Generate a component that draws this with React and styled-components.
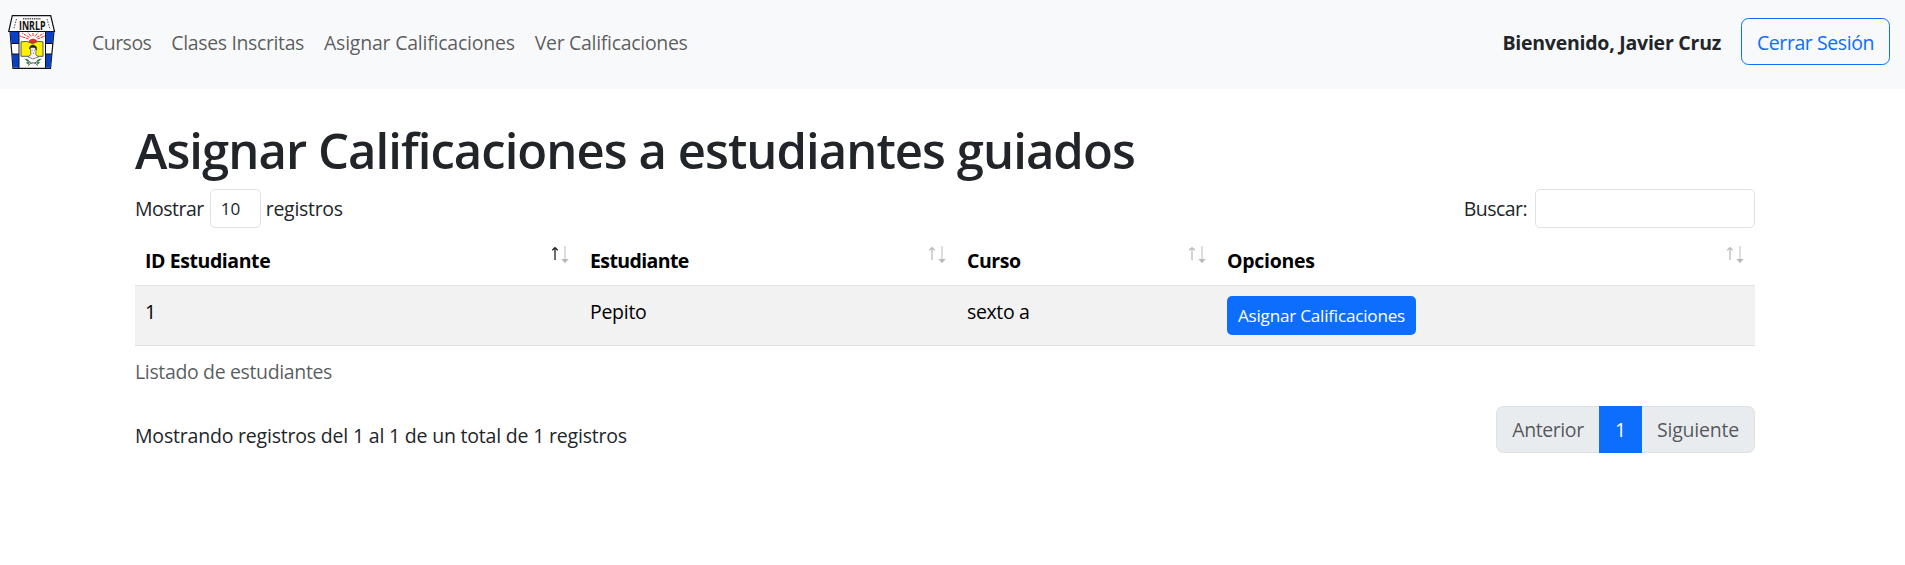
import React from "react";
import styled, { createGlobalStyle } from "styled-components";

const GlobalStyle = createGlobalStyle`
  *, *::before, *::after { box-sizing: border-box; }
  body {
    margin: 0;
    background: #fff;
    color: #212529;
    font-family: "Segoe UI", "Open Sans", "Noto Sans", sans-serif;
    font-size: 19.5px;
    font-weight: 400;
    line-height: 32px;
  }
  button, input, select { font: inherit; color: inherit; margin: 0; }
`;

const Text = styled.span`
  letter-spacing: ${(p) => p.$track || 0}px;
  white-space: nowrap;
`;

const Navbar = styled.nav`
  display: flex;
  align-items: flex-start;
  height: 88.5px;
  padding: 0 15px 0 0;
  background: #f8f9fa;
`;

const Brand = styled.a`
  display: block;
  width: 70px;
  height: 88px;
  margin-right: 12px;
`;

const NavLinks = styled.div`
  display: flex;
  flex: 1;
  padding-top: 27px;
`;

const NavLink = styled.a`
  padding: 0 10px;
  color: rgba(0, 0, 0, 0.65);
  text-decoration: none;
  letter-spacing: ${(p) => p.$track}px;
  white-space: nowrap;
`;

const Welcome = styled.strong`
  margin: 27px 20px 0 0;
  font-weight: 700;
  letter-spacing: -0.24px;
`;

const LogoutButton = styled.button`
  width: 149px;
  height: 47px;
  margin-top: 18px;
  padding: 2px 0 0;
  border: 1px solid #0d6efd;
  border-radius: 7.5px;
  background: transparent;
  color: #0d6efd;
  letter-spacing: -0.43px;
`;

const Container = styled.main`
  width: 1620px;
  margin: 30px auto 0 135px;
`;

const Title = styled.h1`
  margin: 0 0 8px;
  font-size: 49px;
  font-weight: 560;
  line-height: 62.5px;
  letter-spacing: -0.95px;
  white-space: nowrap;
`;

const Controls = styled.div`
  display: flex;
  justify-content: space-between;
  height: 46px;
`;

const ControlLabel = styled.label`
  display: flex;
  align-items: center;
  height: 39px;
`;

const LengthBox = styled.button`
  width: 51px;
  height: 39px;
  margin: 0 5px 0 6px;
  padding: 0 0 0 10px;
  border: 1px solid #dee2e6;
  border-radius: 5px;
  background: #fff;
  font-size: 17.1px;
  text-align: left;
`;

const SearchInput = styled.input`
  width: 220px;
  height: 39px;
  margin-left: 8px;
  border: 1px solid #dee2e6;
  border-radius: 5px;
  background: #fff;
`;

const Table = styled.table`
  width: 100%;
  table-layout: fixed;
  border-collapse: separate;
  border-spacing: 0;
  caption-side: bottom;
  color: #000;
`;

const HeadCell = styled.th`
  width: ${(p) => p.$width}px;
  height: 51px;
  padding: 10px 10px 0;
  border-bottom: 1px solid #dee2e6;
  font-weight: 700;
  text-align: left;
  vertical-align: top;
`;

const HeadContent = styled.div`
  display: flex;
  justify-content: space-between;
`;

const SortIcon = styled.svg`
  flex: none;
  width: 18px;
  height: 18px;
  margin: 1px 1px 0 0;
`;

const Cell = styled.td`
  height: 60px;
  padding: 10px 10px 0;
  border-bottom: 1px solid #dee2e6;
  background: #f2f2f2;
  vertical-align: top;
`;

const AssignButton = styled.button`
  display: block;
  width: 189px;
  height: 39px;
  padding: 0;
  border: 0;
  border-radius: 5px;
  background: #0d6efd;
  color: #fff;
  font-size: 17.1px;
  letter-spacing: -0.21px;
`;

const Caption = styled.caption`
  height: 50px;
  padding: 10px 0 8px;
  color: rgba(33, 37, 41, 0.75);
  text-align: left;
`;

const Footer = styled.div`
  display: flex;
  justify-content: space-between;
  margin-top: 10px;
`;

const Info = styled.div`
  padding-top: 14px;
`;

const Pagination = styled.div`
  display: flex;
  height: 47px;
  border-radius: 7.5px;
`;

const PageItem = styled.button`
  width: ${(p) => p.$width}px;
  padding: 0;
  border: 1px solid ${(p) => (p.$active ? "#0d6efd" : "#dee2e6")};
  border-left-width: ${(p) => (p.$side === "right" ? 0 : 1)}px;
  border-right-width: ${(p) => (p.$side === "left" ? 0 : 1)}px;
  border-radius: ${(p) =>
    p.$side === "left" ? "7.5px 0 0 7.5px" : p.$side === "right" ? "0 7.5px 7.5px 0" : "0"};
  background: ${(p) => (p.$active ? "#0d6efd" : "#e9ecef")};
  color: ${(p) => (p.$active ? "#fff" : "rgba(33, 37, 41, 0.75)")};
`;

function Logo() {
  return (
    <svg width="70" height="88" viewBox="0 0 70 88" aria-label="INRLP">
      <path d="M10 31 L13 68.3 H50.5 L54 31 Z" fill="#fff" stroke="#111" strokeWidth="1.2" />
      <path d="M10.2 31.5 H19 V43.5 H11.3 Z M12 54 H19 V67.8 H13.2 Z" fill="#0b3fc4" />
      <path d="M45.5 31.5 H53.8 L52.8 43.5 H45.5 Z M45.5 54 H51.8 L50.5 67.8 H45.5 Z" fill="#0b3fc4" />
      <path d="M19 31.5 V68 M45.5 31.5 V68 M11.2 43.5 H19 M12 54 H19 M45.5 43.5 H53 M45.5 54 H52" stroke="#111" strokeWidth="1" />
      <path d="M12.3 15.7 H50.7 L54.5 31.5 H8.7 Z" fill="#fafafa" stroke="#111" strokeWidth="1.2" />
      <path d="M16.5 19 L13.8 29 M47 19 L50 29" stroke="#555" strokeWidth="1" strokeDasharray="1.5 1.2" />
      <path d="M23 18.8 H41" stroke="#555" strokeWidth="1.5" strokeDasharray="1.4 .8" />
      <text x="19" y="29.7" fontFamily="Open Sans, sans-serif" fontSize="11.5" fontWeight="700" textLength="26.5" lengthAdjust="spacingAndGlyphs" fill="#111">INRLP</text>
      <path d="M28.5 39 L20 36 M29.5 37.5 L22 33 M31 36.5 L28 32.5 M33 36 V32.5 M35 36.5 L38 32.5 M36.5 37.5 L43.5 33.5 M37.5 39 L45 36" stroke="#ef2b24" strokeWidth="1" strokeDasharray="3 .7" />
      <path d="M28.8 41.5 C29.5 37.8 36.5 37.8 37.2 41.5 L36.2 43.7 H30 Z" fill="#ec2b20" />
      <path d="M21 41.8 Q27 40.3 32.5 43.5 Q38 40.3 43 41.8 V56.3 H21 Z" fill="#fff200" stroke="#333" strokeWidth=".8" />
      <path d="M30 47 C30.5 44.2 36.2 44.5 36.2 49 C36.2 52 35.4 54 36 55 L38.5 57 L32.8 59 L28 56.8 L31 54.5 Z" fill="#f2f2f2" stroke="#333" strokeWidth=".6" />
      <path d="M29.5 49 C29.4 45 33.6 44 36.4 47 L36.3 50 L35 47.5 L30.8 47.6 Z M31.5 50.3 H32.6 M34 50.3 H35.2 M32.8 53.2 H34.3" fill="#222" stroke="#222" strokeWidth=".5" />
      <path d="M26 59 L31 63 M40 59 L35 63 M28 65.5 Q33 60 38 65.5" fill="none" stroke="#333" strokeWidth=".9" />
      <path d="M24 58.5 L29 60 L28 62 Z M42 58.5 L37 60 L38 62 Z M25.5 62.5 L29.5 62 L28.5 64.5 Z M40.5 62.5 L36.5 62 L37.5 64.5 Z" fill="#287a38" />
    </svg>
  );
}

function SortArrows({ active }) {
  return (
    <SortIcon viewBox="0 0 18 18">
      <path d="M4 14 V2.2 M1.2 4.3 L4 1.7 L6.8 4.3" fill="none" stroke={active ? "#222" : "#bcbcbc"} strokeWidth="1.3" />
      <path d="M14 0 V14" stroke="#dedede" strokeWidth="2" />
      <path d="M10.3 13 H17.7 L14 17.2 Z" fill="#b9b9b9" />
    </SortIcon>
  );
}

const links = [
  ["Cursos", -0.53],
  ["Clases Inscritas", -0.375],
  ["Asignar Calificaciones", -0.23],
  ["Ver Calificaciones", -0.31],
];

const columns = [
  { label: "ID Estudiante", width: 445, track: -0.42, active: true },
  { label: "Estudiante", width: 377, track: -0.6 },
  { label: "Curso", width: 260, track: -0.45 },
  { label: "Opciones", width: 538, track: -0.3 },
];

export default function App() {
  return (
    <>
      <GlobalStyle />
      <Navbar>
        <Brand><Logo /></Brand>
        <NavLinks>
          {links.map(([label, track]) => (
            <NavLink key={label} $track={track}>{label}</NavLink>
          ))}
        </NavLinks>
        <Welcome>Bienvenido, Javier Cruz</Welcome>
        <LogoutButton>Cerrar Sesión</LogoutButton>
      </Navbar>
      <Container>
        <Title>Asignar Calificaciones a estudiantes guiados</Title>
        <Controls>
          <ControlLabel>
            <Text $track={-0.5}>Mostrar</Text>
            <LengthBox>10</LengthBox>
            <Text $track={-0.3}>registros</Text>
          </ControlLabel>
          <ControlLabel>
            <Text $track={-0.55}>Buscar:</Text>
            <SearchInput />
          </ControlLabel>
        </Controls>
        <Table>
          <Caption><Text $track={-0.355}>Listado de estudiantes</Text></Caption>
          <thead>
            <tr>
              {columns.map((c) => (
                <HeadCell key={c.label} $width={c.width}>
                  <HeadContent>
                    <Text $track={c.track}>{c.label}</Text>
                    <SortArrows active={c.active} />
                  </HeadContent>
                </HeadCell>
              ))}
            </tr>
          </thead>
          <tbody>
            <tr>
              <Cell>1</Cell>
              <Cell><Text $track={-0.28}>Pepito</Text></Cell>
              <Cell><Text $track={-0.36}>sexto a</Text></Cell>
              <Cell><AssignButton>Asignar Calificaciones</AssignButton></Cell>
            </tr>
          </tbody>
        </Table>
        <Footer>
          <Info><Text $track={-0.195}>Mostrando registros del 1 al 1 de un total de 1 registros</Text></Info>
          <Pagination>
            <PageItem $width={103} $side="left"><Text $track={-0.41}>Anterior</Text></PageItem>
            <PageItem $width={43} $active>1</PageItem>
            <PageItem $width={113} $side="right"><Text $track={-0.21}>Siguiente</Text></PageItem>
          </Pagination>
        </Footer>
      </Container>
    </>
  );
}
